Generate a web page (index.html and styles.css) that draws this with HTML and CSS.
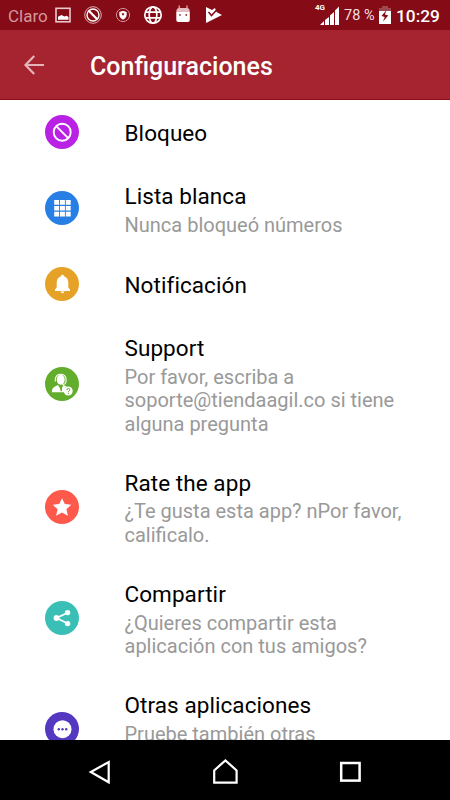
FILE: index.html
```
<!DOCTYPE html>
<html lang="es">
<head>
<meta charset="utf-8">
<title>Configuraciones</title>
<link rel="stylesheet" href="styles.css">
</head>
<body>
<div class="status">
  <span class="carrier">Claro</span>
  <svg class="notices" width="170" height="30" viewBox="54 0 170 30" fill="none">
    <rect x="56" y="8.300" width="14" height="13.500" stroke="#e9c9cc" stroke-width="1.600"/>
    <path d="M58 19.700v-3l3.500-1.700 3 1.500 2-.8 2 1.300v2.700z" fill="#fff"/>
    <circle cx="93" cy="15" r="8.300" stroke="#e3bfc2" stroke-width=".9"/>
    <circle cx="93" cy="15" r="6" stroke="#fff" stroke-width="1.400"/>
    <path d="M88.800 10.800l8.400 8.400" stroke="#fff" stroke-width="2.200"/>
    <circle cx="123" cy="15" r="6.600" stroke="#d68f95"/>
    <path d="M119.300 12l3.700-1.300 3.700 1.300v2.500q0 3.500-3.700 5.200-3.700-1.700-3.700-5.200z" fill="#fff"/>
    <path d="M121.700 14l1.300-1.300 1.300 1.300-1.300 1.800z" fill="#850b16"/>
    <g stroke="#fff" stroke-width="1.700"><circle cx="153" cy="15" r="8.200"/><ellipse cx="153" cy="15" rx="3.800" ry="8.200"/><path d="M145.500 12.200h15M145.500 17.800h15"/></g>
    <path d="M176.300 12q0-4 3-4h7.500q3 0 3 4z" fill="#e4bcc0"/>
    <path d="M179.200 5.500v3M187 5.500v3" stroke="#e4bcc0" stroke-width="1.200"/>
    <path d="M176.300 12h13.500v8q0 2-2 2h-9.500q-2 0-2-2z" fill="#fff"/>
    <path d="M179.200 15h1.500M185.500 15h1.500" stroke="#850b16" stroke-width="1.400"/>
    <path d="M206 7l6 3 3-2 1.500 4 5.500 3-16 8z" fill="#fff"/>
    <path d="M208.500 12l3 3.500 6.500-7" stroke="#850b16" stroke-width="1.500"/>
  </svg>
  <svg class="signal" width="28" height="30" viewBox="314 0 28 30">
    <text class="net" x="315" y="10">4G</text>
    <path d="M320 25l4-4v4zM325 20l4-3v8h-4zM330 15.500l4-3.500v13h-4zM335 10.500l4-4v18.500h-4z" fill="#fff"/>
  </svg>
  <span class="percent">78 %</span>
  <svg class="battery" width="14" height="30" viewBox="378 0 14 30">
    <path d="M382 6h6v2h3v4h-12V8h3z" fill="#9d4850"/>
    <path d="M379 11h12v13h-12z" fill="#fff"/>
    <path d="M386.500 10l-5 6 3.200 1-1.700 4.500 5.300-6-3.400-1z" fill="#850b16"/>
  </svg>
  <span class="clock">10:29</span>
</div>
<header class="bar">
  <svg class="back" width="22" height="22" viewBox="0 0 22 22" fill="none" stroke="#e5b4b9" stroke-width="2.200"><path d="M21 11H2.500M11.200 2L2.500 11l8.700 9"/></svg>
  <h1>Configuraciones</h1>
</header>
<main class="list">
  <section class="item">
    <svg class="icon" viewBox="0 0 34 34"><circle cx="17" cy="17" r="17" fill="#b921e5"/><g fill="none" stroke="#fff" stroke-width="1.900"><circle cx="17.200" cy="17.200" r="8.500"/><path d="M11.200 11.200l12 12"/></g></svg>
    <div class="copy"><h2 class="solo">Bloqueo</h2></div>
  </section>
  <section class="item">
    <svg class="icon" viewBox="0 0 34 34"><circle cx="17" cy="17" r="17" fill="#277fe6"/><path d="M9.200 9h4.900v4.700H9.200zM15 9h4.900v4.700H15zM20.800 9h4.900v4.700h-4.900zM9.200 14.900h4.900v4.700H9.200zM15 14.900h4.900v4.700H15zM20.800 14.900h4.900v4.700h-4.900zM9.200 20.800h4.900v4.700H9.200zM15 20.800h4.900v4.700H15zM20.800 20.800h4.900v4.700h-4.900z" fill="#fff"/></svg>
    <div class="copy"><h2>Lista blanca</h2><p>Nunca bloqueó números</p></div>
  </section>
  <section class="item">
    <svg class="icon" viewBox="0 0 34 34"><circle cx="17" cy="17" r="17" fill="#e5a226"/><path d="M16 9.200q0-1.400 1.500-1.400T19 9.200q4.200 1.300 4.300 6.300v5.100l1.700 2v1.400H10v-1.400l1.700-2v-5.100q.1-5 4.300-6.300zM15.500 24.500h4q-.4 1.800-2 1.800t-2-1.800z" fill="#fff"/></svg>
    <div class="copy"><h2 class="solo">Notificación</h2></div>
  </section>
  <section class="item">
    <svg class="icon" viewBox="0 0 34 34"><circle cx="17" cy="17" r="17" fill="#62ad2c"/><path d="M6.800 25.300q0-5 4.200-6.300l2-1 3 5 2.500-5 3 1.200q-3 2.800-2 6.100z" fill="#fff"/><ellipse cx="15.700" cy="12.800" rx="4" ry="5" fill="#fff"/><path d="M10.300 14.500v-2q.4-5.200 5.400-5.200t5.400 5.200v2q-.5 3-4 3.200" fill="none" stroke="#fff" stroke-width="1.100"/><path d="M15.400 20l1.200 0 .5 3.500-.9 1-.9-1z" fill="#62ad2c"/><circle cx="23.200" cy="24" r="4.500" fill="#fff"/><path d="M21.800 23q0-1.500 1.500-1.500t1.500 1.300q0 .8-1.400 1.700v.7M23.400 25.900v1" fill="none" stroke="#62ad2c" stroke-width="1"/></svg>
    <div class="copy"><h2>Support</h2><p>Por favor, escriba a<br>soporte@tiendaagil.co si tiene<br>alguna pregunta</p></div>
  </section>
  <section class="item">
    <svg class="icon" viewBox="0 0 34 34"><circle cx="17" cy="17" r="17" fill="#ff594b"/><path d="M17 8.200l2.800 5.900 6.500.6-4.900 4.500 1.500 6.600-5.900-3.300-5.900 3.300 1.500-6.600-4.900-4.500 6.500-.6z" fill="#fff"/></svg>
    <div class="copy"><h2>Rate the app</h2><p>¿Te gusta esta app? nPor favor,<br>calificalo.</p></div>
  </section>
  <section class="item">
    <svg class="icon" viewBox="0 0 34 34"><circle cx="17" cy="17" r="17" fill="#3abfb6"/><path d="M22.600 11.700L11.600 17l11 5.500" fill="none" stroke="#fff" stroke-width="1.800"/><g fill="#fff"><circle cx="22.600" cy="11.600" r="2.700"/><circle cx="11.500" cy="17" r="2.900"/><circle cx="22.600" cy="22.600" r="2.700"/></g></svg>
    <div class="copy"><h2>Compartir</h2><p>¿Quieres compartir esta<br>aplicación con tus amigos?</p></div>
  </section>
  <section class="item">
    <svg class="icon" viewBox="0 0 34 34"><circle cx="17" cy="17" r="17" fill="#5438c1"/><circle cx="17.500" cy="17.200" r="9" fill="#fff"/><g fill="#5438c1"><circle cx="13.800" cy="17.300" r="1.200"/><circle cx="17.500" cy="17.300" r="1.200"/><circle cx="21.200" cy="17.300" r="1.200"/></g></svg>
    <div class="copy"><h2>Otras aplicaciones</h2><p class="two-line">Pruebe también otras</p></div>
  </section>
</main>
<nav class="nav">
  <svg width="450" height="60" viewBox="0 740 450 60" fill="none" stroke="#fff" stroke-width="2.200">
    <path d="M108.700 762v20.300L90.800 772z"/>
    <path d="M214.200 782.600v-12.200l11.200-10 11.200 10v12.200z"/>
    <rect x="341.200" y="763" width="18.400" height="17.600" stroke-width="2.500"/>
  </svg>
</nav>
</body>
</html>
```
FILE: styles.css
```
* { box-sizing: border-box; }

body {
  margin: 0;
  width: 450px;
  height: 800px;
  display: flex;
  flex-direction: column;
  overflow: hidden;
  background: #fff;
  font-family: Roboto, sans-serif;
}

h1, h2, p { margin: 0; font-weight: 400; white-space: nowrap; }

.status {
  height: 30px;
  flex: none;
  display: flex;
  align-items: center;
  padding-left: 8px;
  background: #850b16;
  color: #fff;
}

.carrier { width: 46px; font-size: 17px; color: #d5989d; line-height: 30px; padding-top: 2px; }
.notices { flex: none; }
.signal { margin-left: 90px; flex: none; }
.net { font: 700 8px Roboto, sans-serif; fill: #fff; }
.percent { width: 36px; margin-left: 2px; padding-top: 1px; font-size: 14.500px; color: #f3dfe1; white-space: nowrap; }
.battery { flex: none; margin-left: -2px; }
.clock { margin-left: 4px; padding-top: 2px; font-size: 17.300px; font-weight: 500; line-height: 30px; }

.bar {
  height: 70px;
  flex: none;
  display: flex;
  align-items: center;
  padding: 1px 0 0 23px;
  background: #a5242f;
  border-bottom: 1px solid #8b0d18;
  color: #fff;
}

.back { margin-right: 45px; }
.bar h1 { padding-top: 4px; font-size: 25px; font-weight: 500; line-height: 30px; }

.list { flex: 1; min-height: 0; overflow: hidden; }

.item {
  display: flex;
  align-items: center;
  padding: 18.650px 0 18.650px 45px;
}

.icon { width: 34px; height: 34px; flex: none; margin: -5px 45.500px -5px 0; }
.copy h2 { font-size: 22.500px; letter-spacing: 0.070px; line-height: 27px; color: #000; }
.copy .solo { padding-top: 1.500px; margin-bottom: -1.500px; }
.copy p { margin: 3.700px 0 -3.700px; font-size: 20px; line-height: 23.500px; color: #999; }
.copy .two-line { min-height: 47px; }

.nav { height: 60px; flex: none; background: #000; }
.nav svg { display: block; }
```
